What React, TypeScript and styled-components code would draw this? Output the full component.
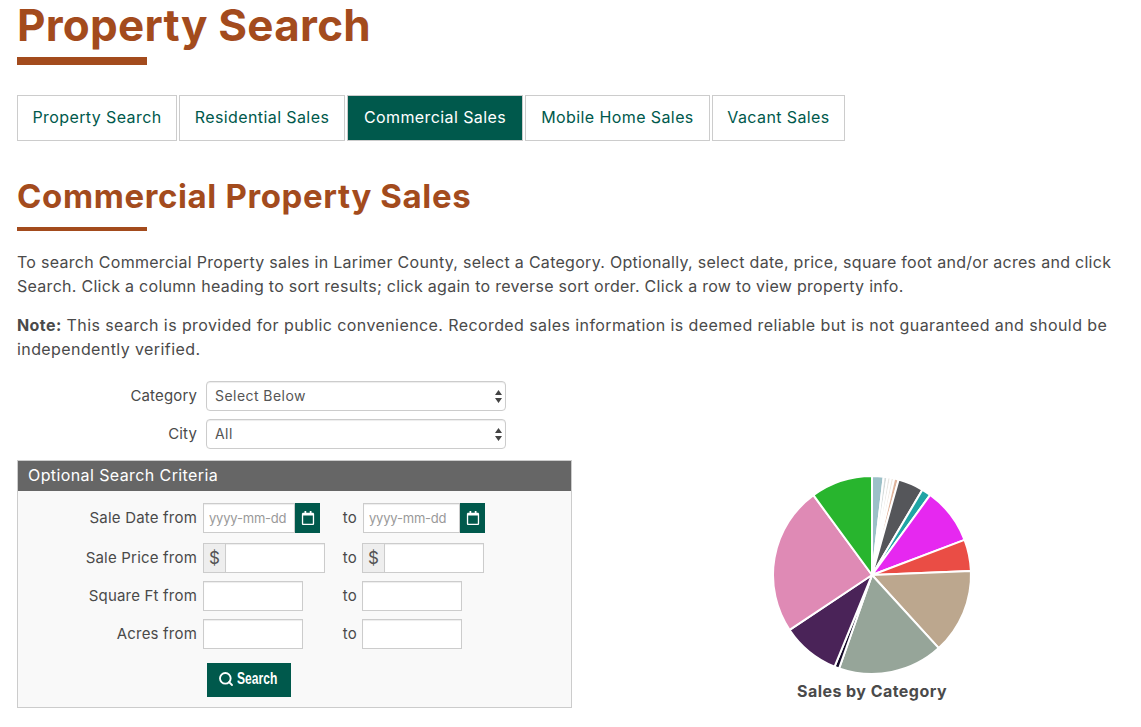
import React from 'react';
import styled, { createGlobalStyle } from 'styled-components';
import { FaRegCalendar } from 'react-icons/fa';
import { Search } from 'lucide-react';

const GlobalStyle = createGlobalStyle`
  html, body {
    margin: 0;
    padding: 0;
    background: #fff;
    overflow: hidden;
  }
  body {
    font-family: Inter, "Noto Sans", "Liberation Sans", sans-serif;
    color: #4a4a4a;
    font-size: 16px;
  }
`;

const brown = '#a34b1d';
const green = '#00594c';

const Page = styled.div`
  width: 1141px;
  height: 727px;
  box-sizing: border-box;
  padding: 0 17px;
  overflow: hidden;
`;

const Title = styled.h1`
  margin: 0;
  height: 57px;
  font-size: 44px;
  line-height: 50px;
  font-weight: 700;
  color: ${brown};
  letter-spacing: 0.25px;
`;

const Rule = styled.div<{ $thick: number }>`
  width: 130px;
  height: ${(p) => p.$thick}px;
  background: ${brown};
`;

const Tabs = styled.nav`
  display: flex;
  gap: 2px;
  margin-top: 30px;
`;

const Tab = styled.a<{ $active?: boolean; $width: number }>`
  box-sizing: border-box;
  width: ${(p) => p.$width}px;
  height: 46px;
  padding-bottom: 2px;
  display: flex;
  align-items: center;
  justify-content: center;
  border: 1px solid #ccc;
  font-size: 16px;
  letter-spacing: 0.4px;
  color: ${(p) => (p.$active ? '#fff' : green)};
  background: ${(p) => (p.$active ? green : '#fff')};
`;

const Subtitle = styled.h2`
  margin: 35px 0 0;
  height: 51px;
  font-size: 33px;
  line-height: 40px;
  font-weight: 700;
  color: ${brown};
  letter-spacing: 0.63px;
`;

const Text = styled.p<{ $top: number; $spacing: number }>`
  margin: ${(p) => p.$top}px 0 0;
  font-size: 16px;
  line-height: 24px;
  letter-spacing: ${(p) => p.$spacing}px;
  width: 1108px;
`;

const Columns = styled.div`
  display: flex;
  margin-top: 20px;
`;

const LeftColumn = styled.div`
  width: 555px;
  flex: none;
`;

const SelectRow = styled.div`
  display: flex;
  align-items: center;
  gap: 9px;
  height: 30px;
  margin-bottom: 8px;
`;

const SelectLabel = styled.label`
  width: 180px;
  padding-bottom: 2px;
  text-align: right;
  font-size: 15px;
  letter-spacing: 0.15px;
`;

const SelectBox = styled.div`
  position: relative;
  width: 300px;
  height: 30px;
`;

const NativeSelect = styled.select`
  appearance: none;
  width: 100%;
  height: 100%;
  box-sizing: border-box;
  padding: 0 8px 2px;
  border: 1px solid #ccc;
  border-radius: 4px;
  background: #fff;
  box-shadow: inset 0 1px 1px rgba(0, 0, 0, 0.075);
  font: inherit;
  font-size: 14px;
  letter-spacing: 0.45px;
  color: #555;
`;

const Arrows = styled.svg`
  position: absolute;
  right: 4px;
  top: 9px;
  pointer-events: none;
`;

const Panel = styled.section`
  box-sizing: border-box;
  height: 248px;
  margin-top: 11px;
  border: 1px solid #ccc;
  background: #f9f9f9;
`;

const PanelHeader = styled.div`
  height: 30px;
  padding-left: 10px;
  background: #666;
  color: #fff;
  font-size: 16px;
  line-height: 28px;
  letter-spacing: 0.4px;
`;

const PanelBody = styled.div`
  padding-top: 12px;
`;

const FormRow = styled.div<{ $gap: number }>`
  display: grid;
  grid-template-columns: 179px 140px 20px auto;
  align-items: center;
  height: 30px;
  margin-bottom: ${(p) => p.$gap}px;
`;

const FieldLabel = styled.label`
  padding-bottom: 2px;
  text-align: right;
  font-size: 15px;
  letter-spacing: 0.2px;
`;

const ToLabel = styled.label`
  padding-bottom: 1px;
  text-align: right;
  font-size: 15px;
  letter-spacing: 0.2px;
`;

const Field = styled.div<{ $left: number }>`
  display: flex;
  margin-left: ${(p) => p.$left}px;
`;

const Input = styled.input<{ $width: number }>`
  box-sizing: border-box;
  width: ${(p) => p.$width}px;
  height: 30px;
  padding: 0 5px;
  border: 1px solid #ccc;
  background: #fff;
  box-shadow: inset 0 1px 1px rgba(0, 0, 0, 0.075);
  font: inherit;
  font-size: 13px;
  letter-spacing: -0.2px;
  outline: none;
  &::placeholder {
    color: #999;
    opacity: 1;
  }
`;

const CalendarAddon = styled.span`
  width: 25px;
  height: 30px;
  flex: none;
  display: flex;
  align-items: center;
  justify-content: center;
  background: ${green};
  color: #fff;
  font-size: 14px;
`;

const DollarAddon = styled.span`
  box-sizing: border-box;
  width: 22px;
  height: 30px;
  flex: none;
  display: flex;
  align-items: center;
  justify-content: center;
  border: 1px solid #ccc;
  border-right: none;
  background: #eee;
  font-size: 17px;
  color: #555;
`;

const SearchButton = styled.button`
  display: flex;
  align-items: center;
  gap: 3px;
  width: 84px;
  height: 34px;
  margin: 14px 0 0 189px;
  padding: 0 0 2px 11px;
  border: none;
  background: ${green};
  color: #fff;
  font-family: "Liberation Sans", sans-serif;
  font-size: 17px;
  font-weight: 700;
  svg {
    flex: none;
  }
`;

const SearchLabel = styled.span`
  display: inline-block;
  flex: none;
  transform: scaleX(0.71);
  transform-origin: left center;
`;

const ChartColumn = styled.figure`
  flex: none;
  width: 538px;
  margin: 0 0 7px 31px;
  align-self: flex-end;
  display: flex;
  flex-direction: column;
  align-items: center;
`;

const Caption = styled.figcaption`
  margin-top: 5px;
  font-size: 16px;
  line-height: 20px;
  font-weight: 700;
  letter-spacing: 0.45px;
  color: #4a4a4a;
`;

const slices: { to: number; color: string }[] = [
  { to: 6.8, color: '#9cc0c8' },
  { to: 9, color: '#d5dcdc' },
  { to: 11, color: '#e8e6e2' },
  { to: 13, color: '#f0e8e0' },
  { to: 15.6, color: '#e0b49c' },
  { to: 30.6, color: '#55565a' },
  { to: 36, color: '#20a5a5' },
  { to: 69.2, color: '#e628f0' },
  { to: 87.7, color: '#ea4d45' },
  { to: 137.6, color: '#bca78e' },
  { to: 199.4, color: '#96a599' },
  { to: 202.2, color: '#140a28' },
  { to: 236.3, color: '#4a2358' },
  { to: 323.7, color: '#df8ab5' },
  { to: 360, color: '#28b52e' },
];

const R = 99;
const C = 101;

const point = (deg: number) => {
  const a = (deg * Math.PI) / 180;
  return `${(C + R * Math.sin(a)).toFixed(2)} ${(C - R * Math.cos(a)).toFixed(2)}`;
};

const Pie = () => {
  let from = 0;
  return (
    <svg width={202} height={202} viewBox="0 0 202 202">
      {slices.map((s) => {
        const large = s.to - from > 180 ? 1 : 0;
        const d = `M${C} ${C}L${point(from)}A${R} ${R} 0 ${large} 1 ${point(s.to)}Z`;
        from = s.to;
        return <path key={s.to} d={d} fill={s.color} stroke="#fff" strokeWidth={2} strokeLinejoin="round" />;
      })}
    </svg>
  );
};

const SelectField = ({ label, value }: { label: string; value: string }) => (
  <SelectRow>
    <SelectLabel>{label}</SelectLabel>
    <SelectBox>
      <NativeSelect defaultValue={value}>
        <option>{value}</option>
      </NativeSelect>
      <Arrows width={7} height={13} viewBox="0 0 7 13">
        <path d="M3.5 0L7 5H0Z M0 8H7L3.5 13Z" fill="#444" />
      </Arrows>
    </SelectBox>
  </SelectRow>
);

const App: React.FC = () => (
  <Page>
    <GlobalStyle />
    <Title>Property Search</Title>
    <Rule $thick={8} />
    <Tabs>
      <Tab $width={160}>Property Search</Tab>
      <Tab $width={166}>Residential Sales</Tab>
      <Tab $width={176} $active>Commercial Sales</Tab>
      <Tab $width={185}>Mobile Home Sales</Tab>
      <Tab $width={133}>Vacant Sales</Tab>
    </Tabs>
    <Subtitle>Commercial Property Sales</Subtitle>
    <Rule $thick={4} />
    <Text $top={19} $spacing={0.285}>
      To search Commercial Property sales in Larimer County, select a Category. Optionally, select date, price, square
      foot and/or acres and click Search. Click a column heading to sort results; click again to reverse sort order.
      Click a row to view property info.
    </Text>
    <Text $top={15} $spacing={0.41}>
      <strong>Note:</strong> This search is provided for public convenience. Recorded sales information is deemed
      reliable but is not guaranteed and should be independently verified.
    </Text>
    <Columns>
      <LeftColumn>
        <SelectField label="Category" value="Select Below" />
        <SelectField label="City" value="All" />
        <Panel>
          <PanelHeader>Optional Search Criteria</PanelHeader>
          <PanelBody>
            <FormRow $gap={10}>
              <FieldLabel>Sale Date from</FieldLabel>
              <Field $left={6}>
                <Input $width={92} placeholder="yyyy-mm-dd" />
                <CalendarAddon>
                  <FaRegCalendar />
                </CalendarAddon>
              </Field>
              <ToLabel>to</ToLabel>
              <Field $left={6}>
                <Input $width={97} placeholder="yyyy-mm-dd" />
                <CalendarAddon>
                  <FaRegCalendar />
                </CalendarAddon>
              </Field>
            </FormRow>
            <FormRow $gap={8}>
              <FieldLabel>Sale Price from</FieldLabel>
              <Field $left={6}>
                <DollarAddon>$</DollarAddon>
                <Input $width={100} />
              </Field>
              <ToLabel>to</ToLabel>
              <Field $left={5}>
                <DollarAddon>$</DollarAddon>
                <Input $width={100} />
              </Field>
            </FormRow>
            <FormRow $gap={8}>
              <FieldLabel>Square Ft from</FieldLabel>
              <Field $left={6}>
                <Input $width={100} />
              </Field>
              <ToLabel>to</ToLabel>
              <Field $left={5}>
                <Input $width={100} />
              </Field>
            </FormRow>
            <FormRow $gap={0}>
              <FieldLabel>Acres from</FieldLabel>
              <Field $left={6}>
                <Input $width={100} />
              </Field>
              <ToLabel>to</ToLabel>
              <Field $left={5}>
                <Input $width={100} />
              </Field>
            </FormRow>
            <SearchButton>
              <Search size={16} strokeWidth={2.8} />
              <SearchLabel>Search</SearchLabel>
            </SearchButton>
          </PanelBody>
        </Panel>
      </LeftColumn>
      <ChartColumn>
        <Pie />
        <Caption>Sales by Category</Caption>
      </ChartColumn>
    </Columns>
  </Page>
);

export default App;
